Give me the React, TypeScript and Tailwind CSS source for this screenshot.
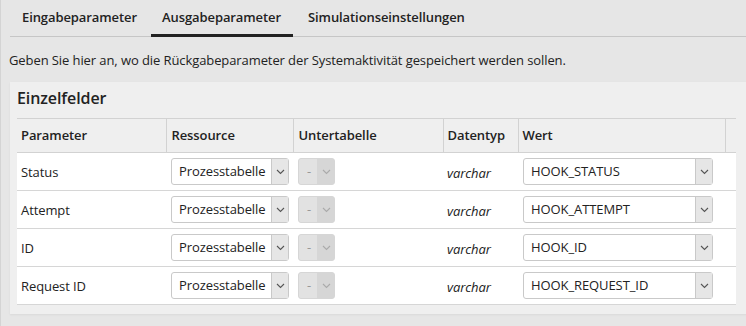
import React from 'react';

const rows = [
  { name: 'Status', wert: 'HOOK_STATUS' },
  { name: 'Attempt', wert: 'HOOK_ATTEMPT' },
  { name: 'ID', wert: 'HOOK_ID' },
  { name: 'Request ID', wert: 'HOOK_REQUEST_ID' },
];

const Chevron: React.FC<{ color?: string }> = ({ color = '#555' }) => (
  <svg width="9" height="6" viewBox="0 0 9 6" fill="none">
    <path d="M1 1l3.5 3.5L8 1" stroke={color} strokeWidth="1.1" />
  </svg>
);

// Auswahlfeld mit Pfeil-Button
const SelectBox: React.FC<{ value: string; width: string; disabled?: boolean }> = ({ value, width, disabled }) => (
  <div
    className={`flex h-[27px] rounded-[3px] border ${width} ${
      disabled ? 'border-[#d6d6d6] bg-[#e2e2e2]' : 'border-[#c9c9c9] bg-white'
    }`}
  >
    <div className={`flex-1 flex items-center overflow-hidden whitespace-nowrap ${disabled ? 'pl-[8px] text-[#999]' : 'pl-[7px] text-[#222]'}`}>
      {value}
    </div>
    <div
      className={`w-[17px] flex items-center justify-center border-l ${
        disabled ? 'border-[#d6d6d6] bg-[#d6d6d6]' : 'border-[#c9c9c9] bg-[#e6e6e6]'
      }`}
    >
      <Chevron color={disabled ? '#aaa' : '#555'} />
    </div>
  </div>
);

export default function App() {
  return (
    <div className="w-[746px] h-[326px] overflow-hidden bg-[#e6e6e6] border-l border-[#d4d4d4] text-[13px] tracking-[-0.09px] text-[#222]" style={{ fontFamily: '"Open Sans", "Liberation Sans", sans-serif' }}>
      {/* Tabs */}
      <div className="ml-[9px] flex h-[37px] border-b border-[#c6c6c6]">
        <div className="ml-[1px] w-[135px] px-[11px] flex items-center font-semibold border-b-[3px] border-transparent -mb-px pt-[2px]">Eingabeparameter</div>
        <div className="ml-[5px] w-[142px] px-[11px] flex items-center font-semibold border-b-[3px] border-[#222] -mb-px pt-[2px]">Ausgabeparameter</div>
        <div className="ml-[4px] px-[11px] flex items-center font-semibold border-b-[3px] border-transparent -mb-px pt-[2px]">Simulationseinstellungen</div>
      </div>

      <div className="pl-[8px] pt-[14px] h-[45px]">
        Geben Sie hier an, wo die Rückgabeparameter der Systemaktivität gespeichert werden sollen.
      </div>

      {/* Einzelfelder */}
      <div className="ml-[9px] bg-[#efefef] pl-[7px] pb-[9px] w-[760px] shadow-[0_1px_2px_rgba(0,0,0,0.06)]">
        <div className="h-[36px] pt-[4px] text-[16px] font-semibold">Einzelfelder</div>
        <table className="w-[719px] table-fixed border-collapse">
          <colgroup>
            <col className="w-[149px]" />
            <col className="w-[127px]" />
            <col className="w-[150px]" />
            <col className="w-[75px]" />
            <col className="w-[207px]" />
            <col className="w-[11px]" />
          </colgroup>
          <thead>
            <tr className="h-[34px] border-t border-b border-[#d2d2d2] text-left">
              <th className="font-semibold pl-[4px] border-r border-[#d2d2d2]">Parameter</th>
              <th className="font-semibold pl-[5px] border-r border-[#d2d2d2]">Ressource</th>
              <th className="font-semibold pl-[5px] border-r border-[#d2d2d2]">Untertabelle</th>
              <th className="font-semibold pl-[4px] border-r border-[#d2d2d2]">Datentyp</th>
              <th className="font-semibold pl-[4px] border-r border-[#d2d2d2]">Wert</th>
              <th></th>
            </tr>
          </thead>
          <tbody className="bg-white">
            {rows.map(row => (
              <tr key={row.name} className="h-[38px] border-b border-[#d6d6d6]">
                <td className="pl-[4px] pt-[2px]">{row.name}</td>
                <td className="pl-[5px]">
                  <SelectBox value="Prozesstabelle" width="w-[118px]" />
                </td>
                <td className="pl-[5px]">
                  <SelectBox value="-" width="w-[37px]" disabled />
                </td>
                <td className="pl-[4px] pt-[4px] italic">varchar</td>
                <td className="pl-[5px]">
                  <SelectBox value={row.wert} width="w-[190px]" />
                </td>
                <td></td>
              </tr>
            ))}
          </tbody>
        </table>
      </div>
    </div>
  );
}
